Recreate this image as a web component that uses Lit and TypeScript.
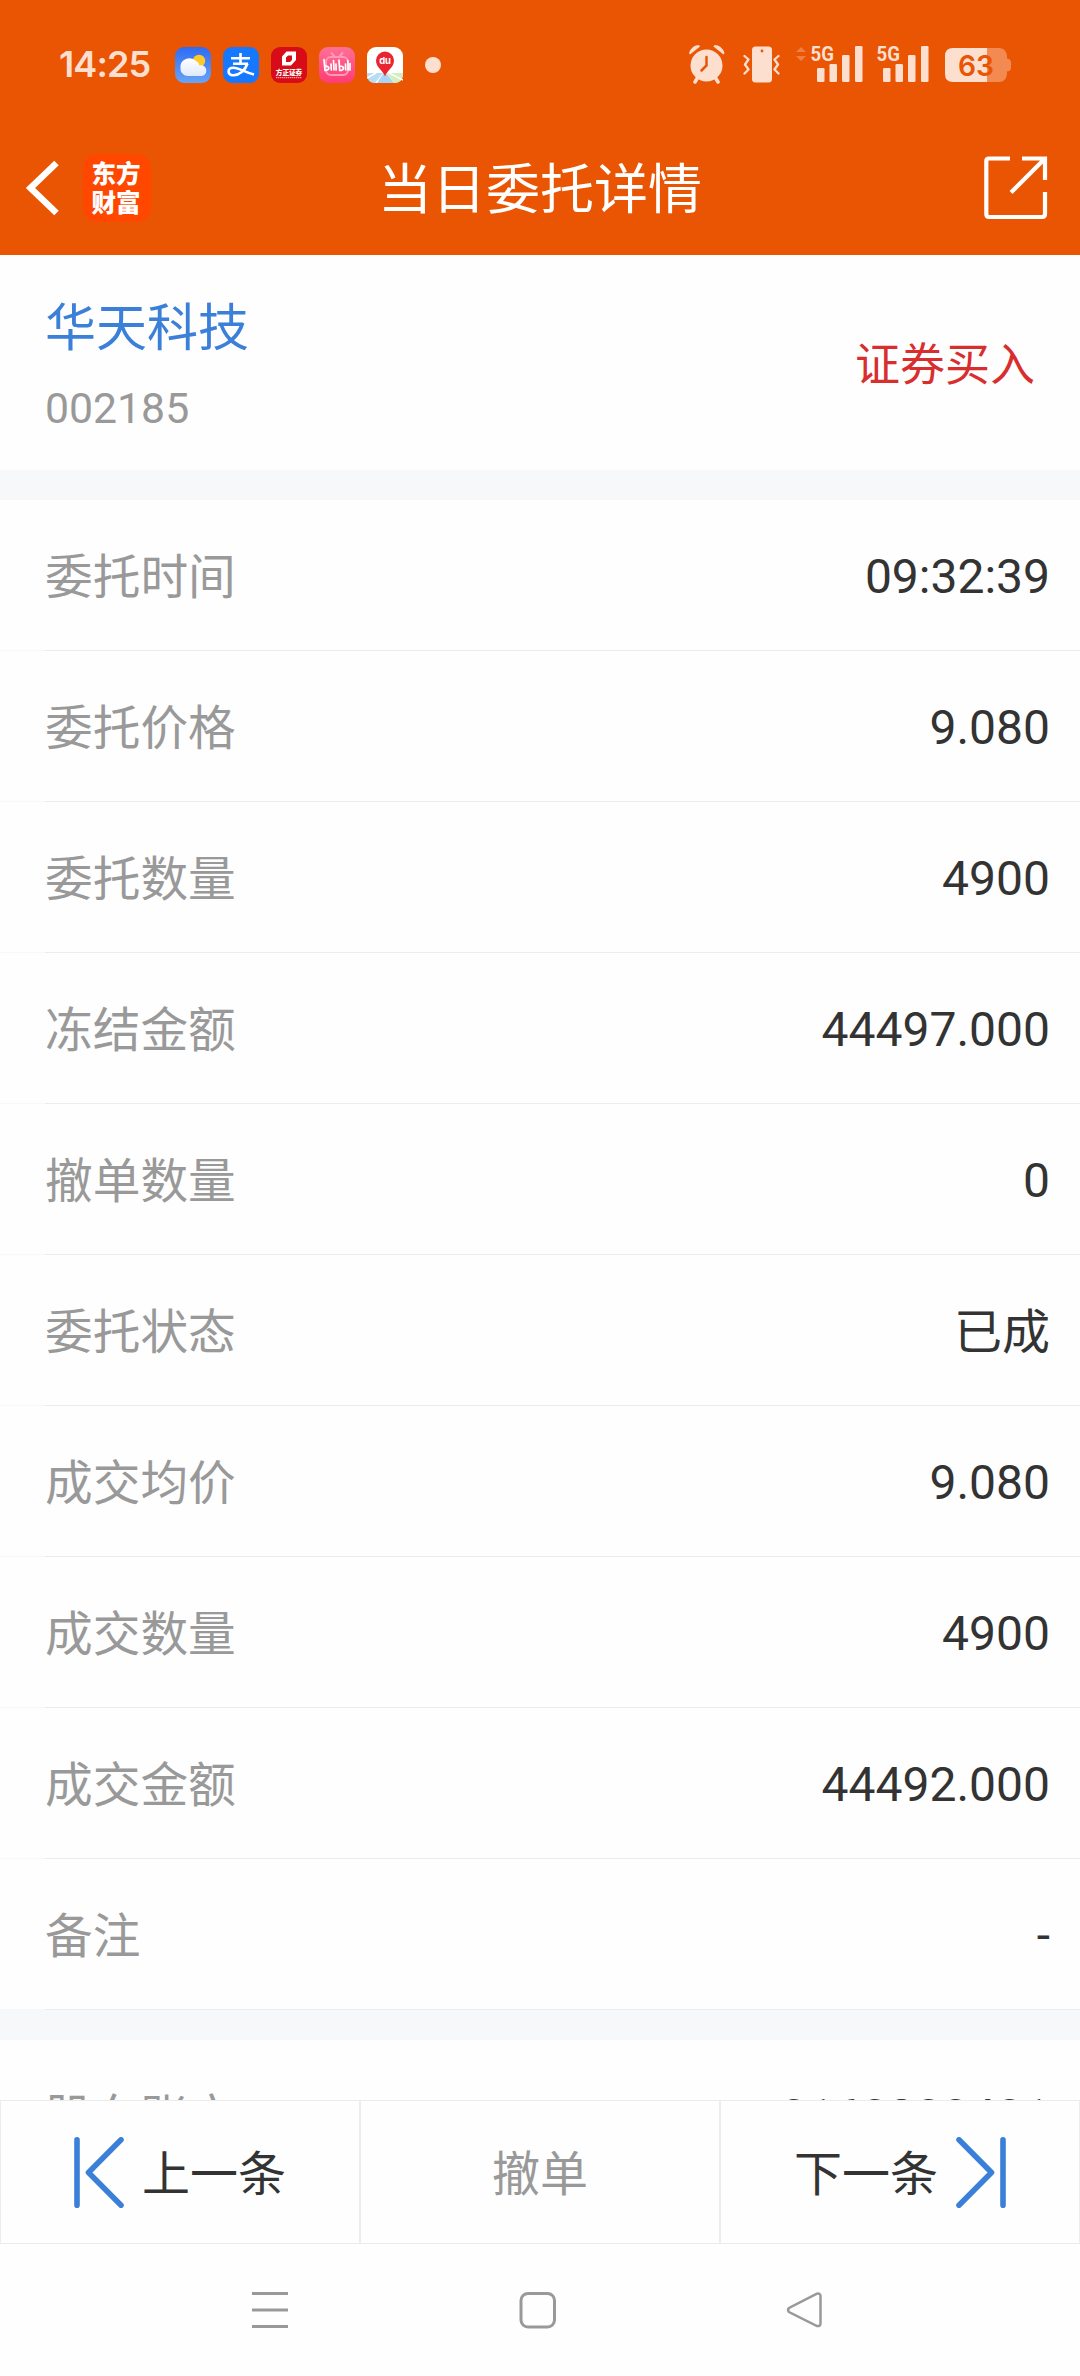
import { LitElement, html, css, svg } from "lit";
import { customElement, property } from "lit/decorators.js";
import { classMap } from "lit/directives/class-map.js";

type Row = { label: string; value: string };

const ROWS: Row[] = [
  { label: "委托时间", value: "09:32:39" },
  { label: "委托价格", value: "9.080" },
  { label: "委托数量", value: "4900" },
  { label: "冻结金额", value: "44497.000" },
  { label: "撤单数量", value: "0" },
  { label: "委托状态", value: "已成" },
  { label: "成交均价", value: "9.080" },
  { label: "成交数量", value: "4900" },
  { label: "成交金额", value: "44492.000" },
  { label: "备注", value: "-" },
];

const signal = (arrows: boolean) => svg`
  ${arrows ? svg`<path d="M5 4l5 5H0zM5 18l5-5H0z" fill="#fff" fill-opacity=".25"/>` : null}
  <text class="g5" x="14.5" y="18" textLength="23.5" lengthAdjust="spacingAndGlyphs">5G</text>
  <g fill="#fcdfcf">
    <rect x="21" y="25" width="7.5" height="14" rx="1.2"/>
    <rect x="33.500" y="21" width="7.5" height="18" rx="1.2"/>
    <rect x="46" y="12" width="7.5" height="27" rx="1.2"/>
    <rect x="59" y="3" width="7.5" height="36" rx="1.2"/>
  </g>`;

@customElement("status-bar")
export class StatusBar extends LitElement {
  static styles = css`
    :host { display: flex; align-items: center; height: 84px; padding: 23px 69px 0 59px; box-sizing: content-box;
      font-family: Inter, "Noto Sans CJK SC", sans-serif; }
    svg { display: block; flex: none; }
    .time { width: 116px; color: #fcdfcf; font-size: 36px; font-weight: 600; letter-spacing: -0.9px; line-height: 40px; white-space: nowrap; padding-bottom: 3px; }
    .apps { display: flex; gap: 12px; align-items: center; flex: 1; }
    .dot { width: 16px; height: 16px; border-radius: 50%; background: #fcdfcf; margin-left: 10px; }
    .g5 { font: 700 21px Roboto, sans-serif; fill: #fcdfcf; }
    .pct { font: 600 29px Inter, sans-serif; fill: #ea5504; }
    .alarm { margin: 0 17px 2px 0; }
    .vib { margin: 0 16px 3px 0; }
    .sig { margin-bottom: 4px; }
    .batt { margin-left: 14px; }
    .fz { font: 900 6.7px "Noto Sans CJK SC", sans-serif; fill: #fff; }
    .du { font: 700 9.5px Inter, sans-serif; fill: #fff; }
  `;
  render() {
    return html`
      <div class="time">14:25</div>
      <div class="apps">
        <svg width="36" height="36" viewBox="0 0 36 36">
          <defs>
            <linearGradient id="sky" x1="0" y1="0" x2="0" y2="1"><stop offset="0" stop-color="#2f6bf2"/><stop offset="1" stop-color="#68a4f4"/></linearGradient>
            <linearGradient id="cl" x1="0" y1="0" x2="0" y2="1"><stop offset="0" stop-color="#fff"/><stop offset="1" stop-color="#dfe9fb"/></linearGradient>
          </defs>
          <rect width="36" height="36" rx="9" fill="url(#sky)"/>
          <circle cx="24" cy="14" r="6.2" fill="#ffc928"/>
          <path d="M12.5 29a7.5 7.5 0 0 1-7-8.5a9 8.5 0 0 1 15.5-6.5a7 7 0 0 1 3.5 4.5a5.4 5.4 0 1 1 .5 10.500z" fill="url(#cl)"/>
        </svg>
        <svg width="36" height="36" viewBox="0 0 36 36">
          <rect width="36" height="36" rx="9" fill="#1677ff"/>
          <g fill="none" stroke="#fff" stroke-width="2.6">
            <path d="M8 11.300H27M17.500 6V16.500M10 16.800H25"/>
            <path d="M24.500 16.500C22.500 23 16 28.500 10 28.200C4 28 4 20.800 10.500 20.800C16 20.800 22 25.500 31 27.500"/>
          </g>
        </svg>
        <svg width="36" height="36" viewBox="0 0 36 36">
          <rect width="36" height="36" rx="9" fill="#d80c18"/>
          <path d="M15.500 4.500H25V13L20 18.500H11V9.500zM17 8.500L15 10.500V15H19L21 13V8.500z" fill="#fff" fill-rule="evenodd"/>
          <text class="fz" x="4.800" y="28" textLength="26.500">方正证券</text>
          <path d="M5 30.700H31" stroke="#fff" stroke-width="1" stroke-dasharray="1.400 .6" opacity=".75"/>
        </svg>
        <svg width="36" height="36" viewBox="0 0 36 36">
          <defs><linearGradient id="pk" x1="0" y1="0" x2="0" y2="1"><stop offset="0" stop-color="#ff7096"/><stop offset="1" stop-color="#ff3b76"/></linearGradient></defs>
          <rect width="36" height="36" rx="9" fill="url(#pk)"/>
          <g fill="none" stroke="#ff9ab8" stroke-width="2" stroke-linecap="round"><rect x="7" y="10" width="22" height="18" rx="5"/><path d="M12.500 6l3 3.500M23.500 6l-3 3.500"/></g>
          <g fill="none" stroke="#fff" stroke-width="1.700" stroke-linecap="round">
            <path d="M5 12.500l1 11c5 0 5-4.500.5-4.500M12 17l.3 6M14.500 13.500l.5 9.500M17 17l.1 6"/>
            <path d="M20 13l.7 10.500c5 0 5-4.500.3-4.500M26.500 17l.2 6M28.800 13.500l.3 9.500M31 16.500v6.500"/>
          </g>
        </svg>
        <svg width="36" height="36" viewBox="0 0 36 36">
          <rect width="36" height="36" rx="9" fill="#fff"/>
          <path d="M0 26H16L8 36Q0 36 0 27z" fill="#b9dcf5"/>
          <path d="M20 26H36V27Q36 36 27 36z" fill="#d3eebd"/>
          <path d="M10 36L16 27H20L27 36z" fill="#a9d4f6"/>
          <path d="M0 31l9-5M36 33l-14-7" stroke="#fff" stroke-width="1.500"/>
          <path d="M18 29.500C16.500 24 9 20.500 9 13.500a9 9 0 0 1 18 0C27 20.500 19.500 24 18 29.500z" fill="#e9252f"/>
          <text class="du" x="12.300" y="17.300" textLength="11.600">du</text>
        </svg>
        <div class="dot"></div>
      </div>
      <svg class="alarm" width="38" height="40" viewBox="0 0 38 40">
        <g fill="#fcdfcf">
          <circle cx="18.500" cy="21.500" r="16"/>
          <path d="M1 9Q4 1 11 1L12 2.500L2 10.500zM36.500 9Q33.500 1 26.500 1L25.500 2.500L35.500 10.500z"/>
        </g>
        <path d="M10 33L7 38M27 33L30 38" stroke="#fcdfcf" stroke-width="3.500" stroke-linecap="round"/>
        <path d="M18.500 13V21.500L13.500 26.500" fill="none" stroke="#ea5504" stroke-width="2.500" stroke-linecap="round"/>
      </svg>
      <svg class="vib" width="37" height="40" viewBox="0 0 37 40">
        <rect x="9" y="2.500" width="20" height="36" rx="3.500" fill="#fcdfcf"/>
        <circle cx="19" cy="7" r="1.400" fill="#ea5504"/>
        <path d="M1.500 12l4 3.500-3.500 5 3.500 5-4 4M35.500 12l-4 3.500 3.500 5-3.500 5 4 4" fill="none" stroke="#fcdfcf" stroke-width="2.300" stroke-linecap="round" stroke-linejoin="round"/>
      </svg>
      <svg class="sig" width="67" height="40" viewBox="0 0 67 40">${signal(true)}</svg>
      <svg class="sig" width="67" height="40" viewBox="1 0 67 40">${signal(false)}</svg>
      <svg class="batt" width="67" height="36" viewBox="0 0 67 36">
        <path d="M9 1H43V35H9Q1 35 1 27V9Q1 1 9 1z" fill="#fcdfcf"/>
        <path d="M43 1H55Q62 1 63 9V11.500Q67 12 67 15V21Q67 24 63 24.500V27Q62 35 55 35H43z" fill="#f38a51"/>
        <text class="pct" x="14" y="28.700" textLength="36" lengthAdjust="spacingAndGlyphs">63</text>
      </svg>`;
  }
}

@customElement("detail-row")
export class DetailRow extends LitElement {
  @property() label = "";
  @property() value = "";
  static styles = css`
    :host { display: block; background: #fefefe; }
    .row { height: 150px; display: flex; align-items: center; justify-content: space-between; padding: 0 30px 0 45px; font-size: 48px; line-height: 70px; }
    .label { color: #999; font-size: 47.7px; padding-top: 6px; }
    .value { color: #333; padding-top: 3px; }
    .han { padding-top: 6px; }
    .rule { height: 1px; background: linear-gradient(to right, #f8f8f8 45px, #ececec 45px); }
  `;
  render() {
    const han = /[\u4e00-\u9fff]/.test(this.value);
    return html`
      <div class="row"><span class="label">${this.label}</span><span class=${classMap({ value: true, han })}>${this.value}</span></div>
      <div class="rule"></div>`;
  }
}

@customElement("app-root")
export class AppRoot extends LitElement {
  static styles = css`
    :host { display: flex; flex-direction: column; width: 1080px; height: 2376px; overflow: hidden; background: #fefefe;
      font-family: Roboto, "Noto Sans CJK SC", sans-serif; }
    svg { display: block; flex: none; }
    .head { background: #ea5504; height: 255px; flex: none; display: flex; flex-direction: column; }
    .nav { flex: 1; display: grid; grid-template-columns: 1fr auto 1fr; align-items: center; padding: 13px 25px 0; }
    .left { display: flex; align-items: center; gap: 24px; }
    .logo { width: 68px; height: 68px; border-radius: 14px; background: #ff4700; box-sizing: border-box; padding: 4px 2px 0 0;
      color: #fff; font-family: "Noto Sans CJK SC", sans-serif; font-weight: 900; font-size: 24.5px; line-height: 29px; text-align: center; }
    .title { color: #fff; font-size: 54px; line-height: 78px; padding-top: 7px; }
    .share { justify-self: end; margin-right: 7px; }
    .stock { height: 215px; flex: none; box-sizing: border-box; padding: 6px 45px 0; display: flex; align-items: center; justify-content: space-between; }
    .name { color: #3b80d8; font-size: 51px; line-height: 74px; }
    .code { color: #999; font-size: 42.75px; line-height: 60px; margin: 12px 0 1px; }
    .side { color: #d82e2e; font-size: 45px; line-height: 66px; }
    .gap { height: 30px; flex: none; background: #f6f8fa; }
    .body { flex: 1; min-height: 0; overflow: hidden; }
    .actions { flex: none; height: 144px; display: grid; grid-template-columns: repeat(3, 1fr); }
    .act { border: 1px solid #ececec; display: flex; align-items: center; justify-content: center; gap: 18px; color: #333; font-size: 48px; line-height: 70px; }
    .act span { padding-top: 6px; }
    .act.off { color: #999; }
    .sys { flex: none; height: 132px; display: flex; }
    .keys { display: flex; align-items: center; justify-content: space-between; width: 570px; margin-left: 252px; }
  `;
  render() {
    return html`
      <div class="head">
        <status-bar></status-bar>
        <div class="nav">
          <div class="left">
            <svg width="34" height="56" viewBox="0 0 34 56"><path d="M31.500 3L5.500 28L31.500 53" fill="none" stroke="#fff" stroke-width="6.500"/></svg>
            <div class="logo"><div>东方</div><div>财富</div></div>
          </div>
          <div class="title">当日委托详情</div>
          <svg class="share" width="64" height="64" viewBox="0 0 64 64">
            <path d="M26 2.500H5Q2.300 2.500 2.300 5V58Q2.300 61 5 61H58Q61 61 61 58V36M38 2.500H61V24M60.500 3L27 36.500" fill="none" stroke="#fff" stroke-width="4.200"/>
          </svg>
        </div>
      </div>
      <div class="stock">
        <div>
          <div class="name">华天科技</div>
          <div class="code">002185</div>
        </div>
        <div class="side">证券买入</div>
      </div>
      <div class="gap"></div>
      <div class="body">
        ${ROWS.map((r) => html`<detail-row .label=${r.label} .value=${r.value}></detail-row>`)}
        <div class="gap"></div>
        <detail-row label="股东账户" value="0160200401"></detail-row>
      </div>
      <div class="actions">
        <div class="act">
          <svg width="50" height="71" viewBox="0 0 50 71"><path d="M3 2.800V68.200M47 2.800L14.500 35.500L47 68.200" fill="none" stroke="#3b80d8" stroke-width="5.600" stroke-linecap="round" stroke-linejoin="round"/></svg>
          <span>上一条</span>
        </div>
        <div class="act off"><span>撤单</span></div>
        <div class="act">
          <span>下一条</span>
          <svg width="50" height="71" viewBox="0 0 50 71"><path d="M47 2.800V68.200M3 2.800L35.500 35.500L3 68.200" fill="none" stroke="#3b80d8" stroke-width="5.600" stroke-linecap="round" stroke-linejoin="round"/></svg>
        </div>
      </div>
      <div class="sys">
        <div class="keys">
          <svg width="36" height="38" viewBox="0 0 36 38"><path d="M0 2.500H36M0 19H36M0 35.500H36" stroke="#999" stroke-width="3"/></svg>
          <svg width="38" height="38" viewBox="0 0 38 38"><rect x="3" y="2.500" width="33.500" height="33.500" rx="7" fill="none" stroke="#999" stroke-width="3"/></svg>
          <svg width="36" height="38" viewBox="0 0 36 38"><path d="M31 2.700L3 17Q1 19 3 21L31 35Q34.500 35.500 34.500 32.500V5Q34.500 2 31 2.700z" fill="none" stroke="#999" stroke-width="2.500"/></svg>
        </div>
      </div>`;
  }
}
